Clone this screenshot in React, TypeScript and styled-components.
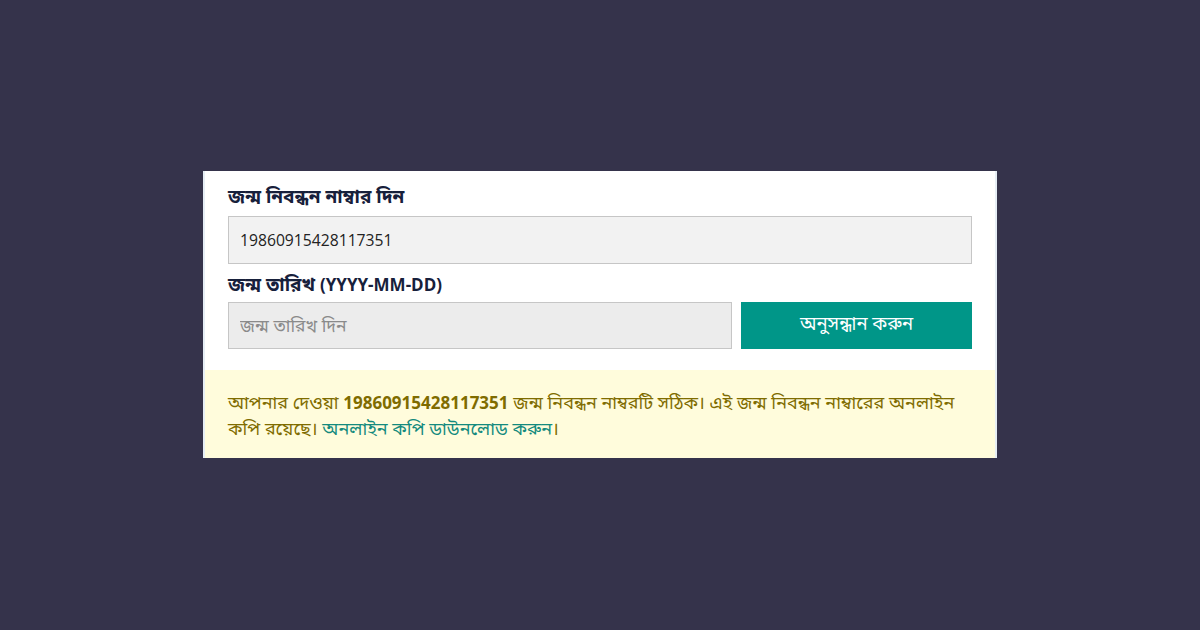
import styled, { createGlobalStyle } from "styled-components";

const GlobalStyle = createGlobalStyle`
  html, body {
    margin: 0;
    padding: 0;
    background: #35334b;
  }
  body {
    font-family: "Noto Sans Bengali", "Noto Sans", "Open Sans", sans-serif;
  }
`;

const Page = styled.div`
  width: 1200px;
  height: 630px;
  display: flex;
  justify-content: center;
  align-items: flex-start;
  padding-top: 171px;
  box-sizing: border-box;
`;

const Card = styled.div`
  width: 794px;
  background: #ffffff;
  border-left: 2px solid #e6eef5;
  border-right: 2px solid #e6eef5;
  box-sizing: border-box;
  display: flex;
  flex-direction: column;
`;

const Form = styled.div`
  padding: 14px 23px 21px 23px;
  display: flex;
  flex-direction: column;
`;

const Label = styled.label`
  color: #17203b;
  font-size: 19px;
  font-weight: 700;
  line-height: 28px;
  height: 28px;
  margin-bottom: 3px;
  white-space: nowrap;
`;

const Latin = styled.span`
  font-family: "Open Sans", "Noto Sans", sans-serif;
  font-size: 17px;
`;

const Input = styled.input<{ $dark?: boolean }>`
  height: ${({ $dark }) => ($dark ? "47px" : "48px")};
  box-sizing: border-box;
  border: 1px solid #c6c6c6;
  background: ${({ $dark }) => ($dark ? "#ececec" : "#f2f2f2")};
  font-family: "Open Sans", "Noto Sans Bengali", "Noto Sans", sans-serif;
  font-size: 15.7px;
  color: #222;
  padding: 0 11px;
  outline: none;
  margin: 0;

  &::placeholder {
    color: #8a8a8a;
    font-size: 17.5px;
    font-family: "Noto Sans Bengali", "Noto Sans", sans-serif;
  }
`;

const Spacer = styled.div`
  height: 7px;
`;

const Row = styled.div`
  display: flex;
  gap: 9px;
`;

const Grow = styled.div`
  flex: 1;
  display: flex;
  flex-direction: column;
`;

const Button = styled.button`
  width: 231px;
  height: 47px;
  border: none;
  background: #009688;
  color: #ffffff;
  font-family: "Noto Sans Bengali", "Noto Sans", sans-serif;
  font-size: 18.5px;
  cursor: pointer;
  padding: 0;
`;

const Alert = styled.div`
  background: #fffcdc;
  padding: 20px 22px 15px 23px;
  color: #7f6c00;
  font-size: 18px;
  line-height: 26px;
`;

const Bold = styled.b`
  font-family: "Open Sans", "Noto Sans", sans-serif;
  font-weight: 700;
  font-size: 17px;
`;

const Link = styled.a`
  color: #138a7e;
  text-decoration: none;
`;

export default function App() {
  return (
    <>
      <GlobalStyle />
      <Page>
        <Card>
          <Form>
            <Label>জন্ম নিবন্ধন নাম্বার দিন</Label>
            <Input defaultValue="19860915428117351" />
            <Spacer />
            <Label>
              জন্ম তারিখ <Latin>(YYYY-MM-DD)</Latin>
            </Label>
            <Row>
              <Grow>
                <Input $dark placeholder="জন্ম তারিখ দিন" />
              </Grow>
              <Button>অনুসন্ধান করুন</Button>
            </Row>
          </Form>
          <Alert>
            আপনার দেওয়া <Bold>19860915428117351</Bold> জন্ম নিবন্ধন নাম্বরটি সঠিক। এই জন্ম নিবন্ধন নাম্বারের অনলাইন কপি রয়েছে।{" "}
            <Link href="#">অনলাইন কপি ডাউনলোড করুন</Link>।
          </Alert>
        </Card>
      </Page>
    </>
  );
}
